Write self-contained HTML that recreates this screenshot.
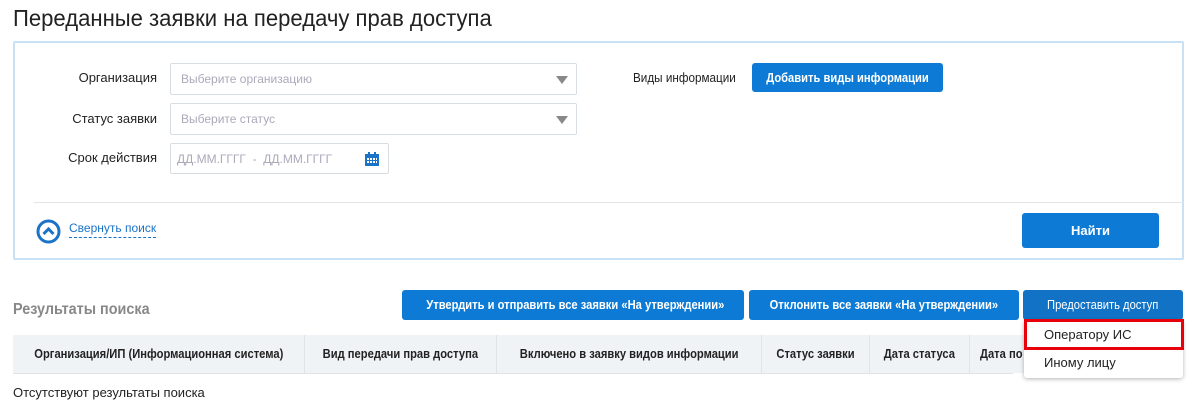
<!DOCTYPE html>
<html><head><meta charset="utf-8"><style>
*{box-sizing:border-box;margin:0;padding:0}
body{width:1198px;height:414px;background:#fff;font-family:"Liberation Sans",sans-serif;color:#222;position:relative;overflow:hidden;font-size:13px}
.a{position:absolute;white-space:nowrap}
.btn{position:absolute;background:#0d7bd6;color:#fff;border-radius:3px;text-align:center;font-weight:bold;font-size:13px;white-space:nowrap;overflow:hidden}
.btn span,.th span{display:inline-block;transform:scaleX(.86)}
.sel{position:absolute;border:1px solid #d8dde2;border-radius:2px;color:#aab;font-size:12px;padding-left:10px;line-height:30px;white-space:nowrap}
.lab{position:absolute;right:1041px;font-size:13px}
.tri{position:absolute;right:8px;top:12px;width:0;height:0;border-left:6px solid transparent;border-right:6px solid transparent;border-top:8px solid #888}
.th{position:absolute;top:335px;height:38px;background:#f0f3f6;border-right:1px solid #e0e4e8;font-weight:bold;font-size:13px;line-height:38px;text-align:center;white-space:nowrap;overflow:hidden}
</style></head><body>
<div class="a" style="left:13px;top:5px;font-size:23px;color:#222;transform:scaleX(.96);transform-origin:left">Переданные заявки на передачу прав доступа</div>
<div class="a" style="left:13px;top:41px;width:1171px;height:219px;border:2px solid #c9e1f5;border-radius:2px"></div>
<div class="lab" style="top:70px">Организация</div>
<div class="sel" style="left:170px;top:63px;width:407px;height:32px">Выберите организацию<div class="tri"></div></div>
<div class="lab" style="top:111px">Статус заявки</div>
<div class="sel" style="left:170px;top:103px;width:407px;height:32px">Выберите статус<div class="tri"></div></div>
<div class="lab" style="top:150px">Срок действия</div>
<div class="sel" style="left:170px;top:143px;width:219px;height:31px;padding-left:6px">ДД.ММ.ГГГГ &nbsp;- &nbsp;ДД.ММ.ГГГГ
<svg class="a" style="left:194px;top:8px" width="14" height="14"><rect x="0" y="2" width="14" height="12" fill="#1a73c8"/><rect x="3" y="0" width="2" height="4" fill="#1a73c8"/><rect x="9" y="0" width="2" height="4" fill="#1a73c8"/><g fill="#fff"><rect x="2" y="6" width="2" height="2"/><rect x="5" y="6" width="2" height="2"/><rect x="8" y="6" width="2" height="2"/><rect x="11" y="6" width="1" height="2"/><rect x="2" y="9" width="2" height="2"/><rect x="5" y="9" width="2" height="2"/><rect x="8" y="9" width="2" height="2"/><rect x="11" y="9" width="1" height="2"/></g></svg></div>
<div class="a" style="left:633px;top:70px;transform:scaleX(.9);transform-origin:left">Виды информации</div>
<div class="btn" style="left:752px;top:63px;width:191px;height:29px;line-height:29px"><span>Добавить виды информации</span></div>
<div class="a" style="left:34px;top:202px;width:1150px;height:1px;background:#e2e5e8"></div>
<svg class="a" style="left:36px;top:219px" width="25" height="25"><circle cx="12.5" cy="12.5" r="10.5" fill="none" stroke="#1a73c8" stroke-width="3"/><path d="M7.5 15 L12.5 10 L17.5 15" fill="none" stroke="#1a73c8" stroke-width="3"/></svg>
<div class="a" style="left:69px;top:221px;color:#1a73c8;font-size:12px;border-bottom:1px dashed #1a73c8;padding-bottom:2px">Свернуть поиск</div>
<div class="btn" style="left:1022px;top:213px;width:137px;height:35px;line-height:35px">Найти</div>
<div class="a" style="left:13px;top:301px;font-size:16px;color:#888;font-weight:bold;transform:scaleX(.9);transform-origin:left">Результаты поиска</div>
<div class="btn" style="left:402px;top:290px;width:342px;height:30px;line-height:30px"><span>Утвердить и отправить все заявки «На утверждении»</span></div>
<div class="btn" style="left:749px;top:290px;width:270px;height:30px;line-height:30px"><span>Отклонить все заявки «На утверждении»</span></div>
<div class="btn" style="left:1023px;top:290px;width:160px;height:30px;line-height:30px;font-weight:normal;background:#1273c6"><span>Предоставить доступ</span></div>
<div class="a" style="left:13px;top:335px;width:1000px;height:39px;border-top:1px solid #e0e4e8;border-bottom:1px solid #e0e4e8"></div>
<div class="th" style="left:13px;width:292px"><span>Организация/ИП (Информационная система)</span></div>
<div class="th" style="left:305px;width:192px"><span>Вид передачи прав доступа</span></div>
<div class="th" style="left:497px;width:265px"><span>Включено в заявку видов информации</span></div>
<div class="th" style="left:762px;width:108px"><span>Статус заявки</span></div>
<div class="th" style="left:870px;width:100px"><span>Дата статуса</span></div>
<div class="th" style="left:970px;width:60px;text-align:left;padding-left:10px;border-right:0"><span style="transform-origin:left">Дата по</span></div>
<div class="a" style="left:1024px;top:320px;width:159px;height:58px;background:#fff;border-radius:3px;box-shadow:0 1px 4px rgba(0,0,0,.3)"></div>
<div class="a" style="left:1024px;top:319px;width:160px;height:31px;border:3px solid #e8000b"></div>
<div class="a" style="left:1044px;top:327px;font-size:13px">Оператору ИС</div>
<div class="a" style="left:1044px;top:355px;font-size:13px">Иному лицу</div>
<div class="a" style="left:13px;top:385px;font-size:13px">Отсутствуют результаты поиска</div>
</body></html>
